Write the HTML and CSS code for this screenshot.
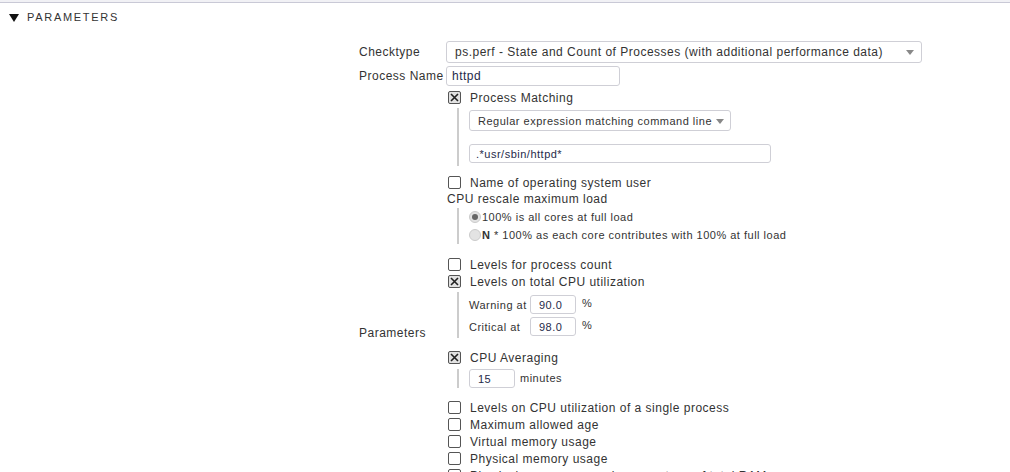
FILE: index.html
```html
<!DOCTYPE html>
<html>
<head>
<meta charset="utf-8">
<link rel="stylesheet" href="styles.css">
</head>
<body>
<div class="topbar"></div>
<div class="section-head">
  <svg class="tri" width="10" height="8" viewBox="0 0 10 8"><polygon points="0,0 10,0 5,8" fill="#111"/></svg>
  <span class="head-title">PARAMETERS</span>
</div>
<div class="form">
  <div class="row">
    <div class="label">Checktype</div>
    <div class="select select-wide"><span>ps.perf - State and Count of Processes (with additional performance data)</span><i class="arrow"></i></div>
  </div>
  <div class="row row-gap">
    <div class="label">Process Name</div>
    <div class="input input-name">httpd</div>
  </div>
  <div class="row row-gap">
    <div class="label label-params">Parameters</div>
    <div class="params">
      <div class="cb-line"><span class="cb checked"><svg width="9" height="9" viewBox="0 0 9 9"><path d="M1 1L8 8M8 1L1 8" stroke="#222" stroke-width="1.6"/></svg></span><span>Process Matching</span></div>
      <div class="nest nest-match">
        <div class="select select-small"><span>Regular expression matching command line</span><i class="arrow"></i></div>
        <div class="input input-regex small">.*usr/sbin/httpd*</div>
      </div>
      <div class="cb-line gap-8"><span class="cb"></span><span>Name of operating system user</span></div>
      <div class="plain-line">CPU rescale maximum load</div>
      <div class="nest">
        <div class="radio-line"><span class="radio on"></span><span>100% is all cores at full load</span></div>
        <div class="radio-line"><span class="radio"></span><span><b>N</b> * 100% as each core contributes with 100% at full load</span></div>
      </div>
      <div class="cb-line gap-12"><span class="cb"></span><span>Levels for process count</span></div>
      <div class="cb-line"><span class="cb checked"><svg width="9" height="9" viewBox="0 0 9 9"><path d="M1 1L8 8M8 1L1 8" stroke="#222" stroke-width="1.6"/></svg></span><span>Levels on total CPU utilization</span></div>
      <div class="nest nest-levels">
        <div class="levels">
          <span class="lv-label">Warning at</span><div class="input input-num small">90.0</div><span class="unit">%</span>
          <span class="lv-label">Critical at</span><div class="input input-num small">98.0</div><span class="unit">%</span>
        </div>
      </div>
      <div class="cb-line gap-11"><span class="cb checked"><svg width="9" height="9" viewBox="0 0 9 9"><path d="M1 1L8 8M8 1L1 8" stroke="#222" stroke-width="1.6"/></svg></span><span>CPU Averaging</span></div>
      <div class="nest nest-avg">
        <div class="avg"><div class="input input-num small">15</div><span class="small-text">minutes</span></div>
      </div>
      <div class="cb-line gap-11"><span class="cb"></span><span>Levels on CPU utilization of a single process</span></div>
      <div class="cb-line"><span class="cb"></span><span>Maximum allowed age</span></div>
      <div class="cb-line"><span class="cb"></span><span>Virtual memory usage</span></div>
      <div class="cb-line"><span class="cb"></span><span>Physical memory usage</span></div>
      <div class="cb-line"><span class="cb"></span><span>Physical memory usage in percentage of total RAM</span></div>
      <div class="cb-line"><span class="cb"></span><span>Resident memory usage</span></div>
      <div class="cb-line"><span class="cb"></span><span>Handle Count (Windows only)</span></div>
    </div>
  </div>
</div>
</body>
</html>
```

FILE: styles.css
```css
html, body {
  margin: 0;
  padding: 0;
  background: #ffffff;
}
body {
  font-family: "Liberation Sans", Arial, sans-serif;
  font-size: 12px;
  letter-spacing: 0.5px;
  color: #333333;
  overflow: hidden;
  height: 472px;
}
.topbar {
  height: 2px;
  background: #f1f1f5;
  border-bottom: 1px solid #c9c9d6;
}
.section-head {
  height: 28px;
  display: flex;
  align-items: center;
  padding-left: 9px;
  gap: 8px;
}
.tri {
  display: block;
  margin-top: 2px;
}
.head-title {
  font-size: 11px;
  letter-spacing: 1.7px;
  color: #333;
}
.form {
  margin-left: 359px;
  padding-top: 10px;
}
.row {
  display: grid;
  grid-template-columns: 87px auto;
  align-items: center;
  justify-items: start;
}
.row-gap {
  margin-top: 3px;
}
.label {
  color: #333;
  line-height: 14px;
}
.label-params {
  align-self: start;
  padding-top: 237px;
}
.select {
  box-sizing: border-box;
  border: 1px solid #cfcfd6;
  border-radius: 3px;
  background: #fff;
  display: flex;
  align-items: center;
  justify-content: space-between;
  color: #333;
}
.select-wide {
  width: 476px;
  height: 22px;
  padding: 0 7px 0 8px;
}
.select-small {
  width: 262px;
  height: 21px;
  padding: 0 6px 0 8px;
  font-size: 11px;
  margin-top: 2px;
}
.arrow {
  width: 0;
  height: 0;
  border-left: 4px solid transparent;
  border-right: 4px solid transparent;
  border-top: 5px solid #888;
  margin-top: 1px;
}
.input {
  box-sizing: border-box;
  border: 1px solid #cfcfd6;
  border-radius: 3px;
  background: #fff;
  display: flex;
  align-items: center;
  color: #262a4a;
  padding-left: 6px;
}
.input-name {
  width: 174px;
  height: 20px;
  font-size: 12px;
  padding-left: 5px;
}
.small {
  font-size: 11px;
}
.input-regex {
  width: 302px;
  height: 19px;
  margin-top: 13px;
}
.input-num {
  width: 46px;
  height: 19px;
  padding-left: 8px;
}
.params {
  display: flex;
  flex-direction: column;
}
.cb-line {
  display: flex;
  align-items: center;
  height: 17px;
  gap: 9px;
  padding-left: 2px;
}
.gap-8 { margin-top: 8px; }
.gap-11 { margin-top: 11px; }
.gap-12 { margin-top: 12px; }
.cb {
  box-sizing: border-box;
  width: 13px;
  height: 13px;
  border: 1px solid #555;
  border-radius: 2px;
  background: #fff;
  display: flex;
  align-items: center;
  justify-content: center;
  flex: none;
}
.cb.checked {
  background: #e2e2e2;
}
.cb svg {
  display: block;
}
.plain-line {
  height: 17px;
  line-height: 17px;
  padding-left: 1px;
}
.nest {
  margin-left: 11px;
  border-left: 2px solid #cccccc;
  padding-left: 10px;
  display: flex;
  flex-direction: column;
  align-items: flex-start;
}
.nest-match {
  margin-top: 2px;
  padding-bottom: 3px;
}
.radio-line {
  display: flex;
  align-items: center;
  height: 18px;
  font-size: 11px;
  gap: 1px;
}
.radio {
  box-sizing: border-box;
  width: 12px;
  height: 12px;
  border-radius: 50%;
  background: #e3e3e3;
  border: 1px solid #cbcbcb;
  display: flex;
  align-items: center;
  justify-content: center;
  flex: none;
}
.radio.on::after {
  content: "";
  width: 6px;
  height: 6px;
  border-radius: 50%;
  background: #666;
}
.radio-line b {
  font-weight: bold;
}
.nest-levels {
  margin-top: 2px;
  padding-top: 3px;
  padding-bottom: 2px;
}
.levels {
  display: grid;
  grid-template-columns: 61px 46px auto;
  row-gap: 3px;
  align-items: center;
  font-size: 11px;
}
.unit {
  margin-left: 6px;
  margin-top: -4px;
}
.nest-avg {
  margin-top: 3px;
}
.avg {
  display: flex;
  align-items: center;
  gap: 5px;
}
.small-text {
  font-size: 11px;
  margin-top: -2px;
}
```
